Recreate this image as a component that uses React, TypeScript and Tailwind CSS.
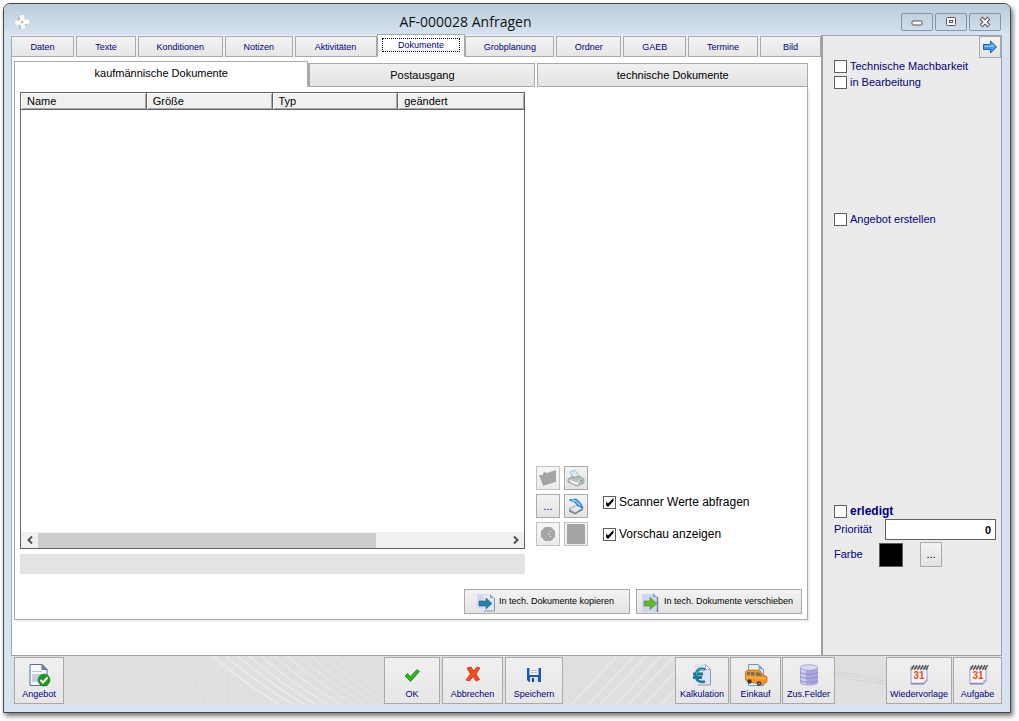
import { useState } from "react";
import type { ReactNode } from "react";

const tabs = [
  { label: "Daten", size: "basis-[63px]" },
  { label: "Texte", size: "basis-[60px]" },
  { label: "Konditionen", size: "basis-[85px]" },
  { label: "Notizen", size: "basis-[68px]" },
  { label: "Aktivitäten", size: "basis-[82px]" },
  { label: "Dokumente", size: "basis-[89px]" },
  { label: "Grobplanung", size: "basis-[89px]" },
  { label: "Ordner", size: "basis-[65px]" },
  { label: "GAEB", size: "basis-[63px]" },
  { label: "Termine", size: "basis-[70px]" },
  { label: "Bild", size: "basis-[61px]" },
];

const button =
  "border border-[#a9a9a9] bg-linear-to-b from-[#f3f3f3] to-[#e3e3e3] flex items-center";

function WindowButton({ label, children }: { label: string; children: ReactNode }) {
  return (
    <button
      aria-label={label}
      className="flex h-[18px] w-8 items-center justify-center rounded-[2px] border border-[#8495ae] bg-linear-to-b from-[#c3d0de] to-[#d0deec]"
    >
      <svg width="14" height="12" viewBox="0 0 14 12">
        {children}
      </svg>
    </button>
  );
}

function CheckBox({
  label,
  checked = false,
  className,
}: {
  label: string;
  checked?: boolean;
  className: string;
}) {
  const [on, setOn] = useState(checked);
  return (
    <label className={`flex items-center gap-[3px] whitespace-nowrap ${className}`}>
      <span className="grid">
        <input
          type="checkbox"
          checked={on}
          onChange={() => setOn(!on)}
          className="col-start-1 row-start-1 size-[13px] appearance-none border border-[#5f5f5f] bg-white"
        />
        {on && (
          <svg
            className="pointer-events-none col-start-1 row-start-1"
            width="13"
            height="13"
            viewBox="0 0 13 13"
          >
            <path d="M3 5.500v3.500l2 2 5.500-6V2L5 7.500z" fill="#000" />
          </svg>
        )}
      </span>
      {label}
    </label>
  );
}

function ToolButton({
  label,
  width,
  children,
}: {
  label: string;
  width: string;
  children: ReactNode;
}) {
  return (
    <button
      className={`flex h-[47px] flex-col items-center justify-end gap-px border border-[#a9a9a9] bg-linear-to-b from-[#f0f0f0] to-[#e6e6e6] pb-[3px] text-[9px] leading-[12px] whitespace-nowrap text-[#000080] ${width}`}
    >
      <svg width="24" height="24" viewBox="0 0 24 24">
        {children}
      </svg>
      {label}
    </button>
  );
}

function Calendar() {
  return (
    <>
      <path d="M4 4h16v14l-3 3H4z" fill="#f6f6fd" stroke="#9c9cc4" />
      <path d="M4 20.500h13l3-3.500" fill="none" stroke="#8d8dba" strokeWidth="1.500" />
      <path d="M17 21v-3.500h3.500z" fill="#b9b9dd" />
      <path d="M4 4.500h16" stroke="#b5b5b5" strokeWidth="3" />
      <path
        d="M4.500 7l2.500-5M7.500 7l2.500-5M10.500 7l2.500-5M13.500 7l2.500-5M16.500 7l2.500-5M19 7l2.500-5"
        stroke="#4a4a4a"
        strokeWidth="1.200"
      />
      <text
        x="12"
        y="16"
        textAnchor="middle"
        fontSize="10"
        fontWeight="bold"
        fontFamily="Liberation Sans, sans-serif"
        fill="#f04a10"
      >
        31
      </text>
    </>
  );
}

function Backdrop() {
  return (
    <svg
      className="absolute inset-0 h-full w-full"
      viewBox="0 0 991 49"
      preserveAspectRatio="none"
      fill="none"
      aria-hidden="true"
    >
      <g stroke="#efefef" strokeWidth="1.200">
        {[0, 13, 25, 36, 48, 61, 74, 86, 98, 110, 122, 134, 146].map((x) => (
          <path key={x} d={`M${202 + x} 0q32 28 68 49`} opacity={1 - x / 190} />
        ))}
        {[0, 17, 29, 44, 57, 73, 90].map((x) => (
          <path key={x} d={`M${560 + x} 49l46-49`} opacity="0.7" />
        ))}
        {[0, 14, 28, 42].map((x) => (
          <path key={x} d={`M${828 + x} 49l16-49`} opacity="0.3" />
        ))}
      </g>
      <g stroke="#e7e7e7" strokeWidth="0.800" opacity="0.7">
        {[0, 4, 8, 12, 16, 20, 25].map((x) => (
          <path key={x} d={`M${96 + x} 49q0-24 9-49`} />
        ))}
        {[0, 8, 16, 24, 32, 40, 48].map((x) => (
          <path key={x} d={`M${176 + x} 0q${7 - x / 4} 22 ${8 - x / 4} 49`} />
        ))}
        <path d="M135 7q50-7 85 0M140 11q45-6 85 2M145 15q45-6 80 1" />
      </g>
      <path
        d="M824 16l50 6M824 18l50 7M824 21l50 7"
        stroke="#d2d2d2"
        strokeWidth="1"
        opacity="0.7"
      />
    </svg>
  );
}

export default function App() {
  const [active, setActive] = useState("Dokumente");

  return (
    <div className="flex h-screen min-h-[640px] flex-col bg-white pt-[3px] pr-2 pb-2 pl-[3px] font-['Liberation_Sans',Arial,sans-serif] text-[11px] text-black">
      <div className="flex min-h-0 flex-1 flex-col rounded-t-[7px] border border-[#484848] bg-[#d6e4f1] pr-2 pb-[7px] pl-[7px] shadow-[2px_3px_5px_rgba(0,0,0,0.55)]">
        <header className="-mr-2 -ml-[7px] flex h-[31px] shrink-0 items-center rounded-t-[6px] bg-linear-to-b from-[#bccbd9] to-[#d6e4f1] pt-1 pr-[9px] pl-[10px]">
          <svg width="16" height="16" viewBox="0 0 16 16">
            <path d="M4 3h5v3h4v5h-4v4H5v-4H1V7h3z" fill="#9fb0c2" opacity=".6" />
            <path d="M6 1.500l4-.5.500 5 4.500-.5.500 4-5 .5.500 4.500-4 .5-.5-4.500-5 .5-.5-4 5-.5z" fill="#fff" />
            <circle cx="8" cy="8" r="1.200" fill="#f3a35c" />
          </svg>
          <h1 className="flex-1 text-center font-['Open_Sans',sans-serif] text-[14px] leading-5 text-[#111]">
            AF-000028 Anfragen
          </h1>
          <div className="flex gap-[2px]">
            <WindowButton label="Minimieren">
              <rect x="2" y="5" width="10" height="4" rx="1" fill="#fff" stroke="#555" />
            </WindowButton>
            <WindowButton label="Maximieren">
              <rect x="2.500" y="1.500" width="9" height="8" rx="1" fill="#fff" stroke="#555" />
              <rect x="5.500" y="4.500" width="3" height="2" fill="#fff" stroke="#555" />
            </WindowButton>
            <WindowButton label="Schließen">
              <path d="M3 2l8 8M11 2l-8 8" stroke="#555" strokeWidth="4" />
              <path d="M3.500 2.500l7 7M10.500 2.500l-7 7" stroke="#fff" strokeWidth="1.800" />
            </WindowButton>
          </div>
        </header>

        <div className="flex min-h-0 flex-1 border-b border-[#a0a0a0]">
          <main className="flex min-w-0 flex-1 flex-col bg-white">
            <nav className="flex h-[22px] shrink-0 items-end bg-[#f0f0f0]">
              {tabs.map((tab, i) => {
                const on = tab.label === active;
                const joined = i === 0 || on || tabs[i - 1].label === active;
                return (
                  <button
                    key={tab.label}
                    onClick={() => setActive(tab.label)}
                    className={`flex grow justify-center border text-[9px] leading-[12px] text-[#000080] ${tab.size} ${
                      joined ? "" : "ml-[2px]"
                    } ${
                      on
                        ? "-mt-px h-[23px] border-[#a9a9a9] border-b-white bg-white px-1 pt-[3px]"
                        : "h-[21px] items-center border-[#a9a9a9] bg-linear-to-b from-[#f3f3f3] to-[#e6e6e6]"
                    }`}
                  >
                    {on ? (
                      <span className="h-[14px] w-full border border-dotted border-black leading-[12px]">
                        {tab.label}
                      </span>
                    ) : (
                      tab.label
                    )}
                  </button>
                );
              })}
            </nav>

            <div className="flex min-h-0 flex-1 flex-col border-l border-[#a9a9a9] pt-1 pr-[13px] pb-[35px] pl-[2px]">
              <div className="flex h-[26px] shrink-0 items-end">
                <button className="h-[26px] flex-[295] border border-b-0 border-[#a9a9a9] bg-white pb-[2px]">
                  kaufmännische Dokumente
                </button>
                <button className="h-6 flex-[226] border border-l-2 border-[#a9a9a9] bg-linear-to-b from-[#f0f0f0] to-[#e3e3e3]">
                  Postausgang
                </button>
                <button className="ml-[2px] h-6 flex-[271] border border-[#a9a9a9] bg-linear-to-b from-[#f0f0f0] to-[#e3e3e3]">
                  technische Dokumente
                </button>
              </div>

              <section className="flex min-h-0 flex-1 flex-col border border-t-0 border-[#a9a9a9] p-[5px] shadow-[2px_2px_0_#f0f0f0]">
                <div className="flex min-h-0 flex-1 gap-[11px]">
                  <div className="flex min-w-0 flex-1 flex-col">
                    <div className="flex min-h-0 flex-1 flex-col border border-[#646464] bg-white">
                      <table className="w-full table-fixed border-separate border-spacing-0">
                        <thead>
                          <tr className="h-[17px]">
                            {["Name", "Größe", "Typ", "geändert"].map((head) => (
                              <th
                                key={head}
                                className="border-r border-b border-[#646464] bg-[#f0f0f0] p-0 pl-[6px] text-left leading-[15px] font-normal shadow-[inset_1px_1px_0_#fff,inset_-1px_-1px_0_#a9a9a9] last:border-r-0"
                              >
                                {head}
                              </th>
                            ))}
                          </tr>
                        </thead>
                        <tbody />
                      </table>
                      <div className="mt-auto flex h-4 items-center bg-[#f0f0f0]">
                        <button aria-label="Nach links" className="flex w-[17px] justify-center">
                          <svg width="8" height="8" viewBox="0 0 8 8" fill="none">
                            <path d="M6 .5L2.500 4 6 7.500" stroke="#505050" strokeWidth="2" />
                          </svg>
                        </button>
                        <div className="flex h-[15px] flex-1">
                          <div className="w-[72%] bg-[#cdcdcd]" />
                        </div>
                        <button aria-label="Nach rechts" className="flex w-[17px] justify-center">
                          <svg width="8" height="8" viewBox="0 0 8 8" fill="none">
                            <path d="M2 .5L5.500 4 2 7.500" stroke="#505050" strokeWidth="2" />
                          </svg>
                        </button>
                      </div>
                    </div>
                    <div className="mt-[5px] h-5 shrink-0 bg-[#e3e3e3]" />
                  </div>

                  <div className="flex w-[266px] shrink-0 items-end gap-[15px] pb-7">
                    <div className="grid grid-cols-[24px_24px] gap-1">
                      <button
                        aria-label="Ordner öffnen"
                        disabled
                        className={`${button} h-6 justify-center opacity-70`}
                      >
                        <svg width="20" height="18" viewBox="0 0 20 18">
                          <path d="M3 7h3V4l2-1 1 1 9-2.500V14l-3 1-9 3-1-3z" fill="#fff" />
                          <path d="M1 6h4V4l2-1 2 1 9-3v12l-3 1-10 3-1-3z" fill="#808080" />
                        </svg>
                      </button>
                      <button aria-label="Drucken" className={`${button} h-6 justify-center`}>
                        <svg width="18" height="18" viewBox="0 0 18 18">
                          <path d="M3 3l5-2 4 6-6 2z" fill="#d5ebfb" stroke="#8aa9c2" strokeWidth=".7" />
                          <path d="M1 10l5-3 1 2 5-2 5 3v4l-7 3-9-4z" fill="#b9bcb9" stroke="#8b8f8b" strokeWidth=".7" />
                          <path d="M2 11l8 3 5-4" stroke="#f4f4f4" fill="none" />
                          <path d="M3 13l7 3 2-1-7-3z" fill="#f8f8f8" />
                          <circle cx="14" cy="11.500" r="1" fill="#3ab43a" />
                        </svg>
                      </button>
                      <button className={`${button} h-6 justify-center text-[#000080]`}>...</button>
                      <button aria-label="Scannen" className={`${button} h-6 justify-center`}>
                        <svg width="18" height="18" viewBox="0 0 18 18">
                          <path d="M2 12l8-4 6 3-8 5z" fill="#e2e7ec" stroke="#7c8792" strokeWidth=".7" />
                          <path d="M2 12.500l6 3.500 8-5v2l-8 4.500-6-3z" fill="#79828a" />
                          <path d="M2 3l7-1q5 3 7 9l-5-2Q8 4 2 3z" fill="#2b8fe8" stroke="#1767b5" strokeWidth=".7" />
                          <path d="M5 3q6 1 8 6" stroke="#8dd0ff" strokeWidth="1.500" fill="none" />
                        </svg>
                      </button>
                      <button
                        aria-label="Verlauf"
                        disabled
                        className={`${button} h-6 justify-center opacity-70`}
                      >
                        <svg width="18" height="18" viewBox="0 0 18 18">
                          <path d="M6 2h6l4 4v6l-4 4H6l-4-4V6z" fill="#808080" />
                          <path d="M9 9h1.500M11 6.500h1M11 11.500h1" stroke="#fff" />
                        </svg>
                      </button>
                      <button
                        aria-label="Leeren"
                        disabled
                        className={`${button} h-6 justify-center opacity-70`}
                      >
                        <svg width="20" height="20" viewBox="0 0 20 20">
                          <path d="M1 0h17l1 1v19H1z" fill="#808080" />
                        </svg>
                      </button>
                    </div>
                    <div className="flex flex-col gap-[18px] pb-[5px] text-[12px] leading-[14px]">
                      <CheckBox label="Scanner Werte abfragen" checked className="" />
                      <CheckBox label="Vorschau anzeigen" checked className="" />
                    </div>
                  </div>
                </div>

                <div className="mt-[15px] flex shrink-0 justify-end gap-[6px] text-[9px]">
                  <button className={`${button} h-[25px] w-[166px] gap-[3px] pl-[11px] whitespace-nowrap`}>
                    <svg width="20" height="20" viewBox="0 0 20 20">
                      <path d="M1 2h11v14H1z" fill="#d3d8f2" />
                      <path d="M7 3h8l4 3v13H7z" fill="#e3e6f8" />
                      <path d="M18.500 6v13H8" stroke="#8b90b0" fill="none" />
                      <path d="M14 2v4h4z" fill="#9a9fb8" />
                      <path d="M3 9h7V6l6 5.500-6 5.500v-3H3z" fill="#2383a8" stroke="#176480" strokeWidth=".6" />
                    </svg>
                    In tech. Dokumente kopieren
                  </button>
                  <button className={`${button} h-[25px] w-[166px] gap-[3px] pl-1 whitespace-nowrap`}>
                    <svg width="20" height="20" viewBox="0 0 20 20">
                      <path d="M1 2h11l5 3v15H1z" fill="#d0d4ef" />
                      <path d="M16.500 5v15" stroke="#7b80a0" strokeWidth="1.500" />
                      <path d="M12 1v4h4z" fill="#9a9fb8" />
                      <path d="M3 9h6V5.500l7 6-7 6V14H3z" fill="#65b82a" stroke="#3f8f17" strokeWidth=".6" />
                    </svg>
                    In tech. Dokumente verschieben
                  </button>
                </div>
              </section>
            </div>
          </main>

          <aside className="flex w-[181px] shrink-0 flex-col border-x border-t border-[#a0a0a0] bg-[#ebebeb] text-[#000080]">
            <div className="flex flex-1 flex-col border-l border-[#a0a0a0] pb-[88px] pl-[11px]">
              <button
                aria-label="Weiter"
                className={`${button} h-[22px] w-[22px] shrink-0 justify-center self-end`}
              >
                <svg width="16" height="16" viewBox="0 0 16 16">
                  <path d="M1.500 5.500h7v-3.500l6 6-6 6v-3.500h-7z" fill="#3d97ea" stroke="#1d5fae" />
                  <path d="M2.500 6.500h7V4.500l3.500 3.500h-10.500z" fill="#8cc8fa" />
                </svg>
              </button>
              <CheckBox label="Technische Machbarkeit" className="h-4" />
              <CheckBox label="in Bearbeitung" className="h-4" />
              <CheckBox label="Angebot erstellen" className="mt-[121px] h-4" />
              <CheckBox label="erledigt" className="mt-auto h-4 text-[12px] font-bold" />
              <div className="flex h-[21px] items-center justify-between pr-[5px]">
                <label htmlFor="prio">Priorität</label>
                <input
                  id="prio"
                  defaultValue="0"
                  className="h-[21px] w-[111px] border border-[#5f5f5f] bg-white pr-1 text-right font-bold text-black"
                />
              </div>
              <div className="mt-[2px] flex h-[25px] items-center">
                <span className="w-[45px]">Farbe</span>
                <span className="size-6 border border-[#5f5f5f] bg-black" />
                <button
                  aria-label="Farbe wählen"
                  className={`${button} ml-[17px] h-[25px] w-[22px] justify-center text-black`}
                >
                  ...
                </button>
              </div>
            </div>
          </aside>
        </div>

        <footer className="relative h-[49px] shrink-0 bg-[#dfdfdf]">
          <Backdrop />
          <div className="relative flex h-full items-start justify-between pt-px pl-[3px]">
            <div className="flex flex-[370]">
              <ToolButton label="Angebot" width="w-[50px]">
                <path d="M3 1.500h12l5 5V22.500H3z" fill="#f6f8fd" stroke="#58719f" />
                <path d="M15 1.500v5h5z" fill="#6f8fc0" stroke="#58719f" />
                <path d="M5 8.500h10" stroke="#b9c2dd" strokeWidth="1" />
                <path d="M5 11h13v8H5z" fill="#c9cde3" />
                <circle cx="17" cy="17" r="6" fill="#1c9a1c" stroke="#0d7510" strokeWidth=".6" />
                <path d="M13.500 17l2.500 2.500 4.500-5" stroke="#fff" strokeWidth="2" fill="none" />
              </ToolButton>
            </div>
            <div className="flex gap-[2px]">
              <ToolButton label="OK" width="w-14">
                <path d="M5 13l2.500-2.500 3 3 6.500-7 2.500 2-9 10z" fill="#30b424" stroke="#168612" strokeWidth=".8" />
              </ToolButton>
              <ToolButton label="Abbrechen" width="w-[61px]">
                <path
                  d="M6 5l4-1 2.500 4 3.500-4 3 1-4 6 3.500 5.500-3.500 1.500-3-4.500-3.500 4.500-3.500-1 4.500-6z"
                  fill="#fb4a20"
                  stroke="#cf2a0c"
                  strokeWidth=".8"
                />
              </ToolButton>
              <ToolButton label="Speichern" width="w-[58px]">
                <path d="M5 5h14v14H7l-2-2z" fill="#1e5ab4" />
                <path d="M7.500 5h9v7h-9z" fill="#f2f5fa" />
                <path d="M9 7.500h6M9 9.500h6" stroke="#b6bcc8" />
                <path d="M8 14h8v5H8z" fill="#d9e2f1" />
                <path d="M10 15h2v4h-2z" fill="#164087" />
              </ToolButton>
            </div>
            <div className="flex flex-[439] justify-end">
              <div className="mr-[51px] flex gap-px">
                <ToolButton label="Kalkulation" width="w-[54px]">
                  <path d="M5 1h11l5 5v16H5z" fill="#dfe2f0" />
                  <path d="M20.500 6v16H8" fill="none" stroke="#9296b4" />
                  <path d="M15.500 1.500v5h5z" fill="#fff" stroke="#9296b4" strokeWidth=".8" />
                  <path
                    d="M15 6.500C9 4.500 6 8 6 12.500S9 20 15 18.500M3 11h10M3 14.500h9"
                    fill="none"
                    stroke="#1c7c98"
                    strokeWidth="2.800"
                  />
                  <path d="M14 6.500q-7-.5-7.500 5" stroke="#63bcd2" fill="none" />
                </ToolButton>
                <ToolButton label="Einkauf" width="w-[51px]">
                  <path d="M4.500 1.500h10l5 5v16h-15z" fill="#e8f2ff" stroke="#6f96cf" />
                  <path d="M14.500 1.500v5h5z" fill="#78a8e3" />
                  <path d="M1.500 9l2-2h12l4 5 3.500 2v5l-4 2.500-14-2.500-3.500-2z" fill="#f7941e" stroke="#b9620b" strokeWidth=".7" />
                  <path d="M3 9h3v3H3zM7 9h3l1 3.500H7zM11.500 9.500h4l3 3.500-6-.3z" fill="#6b6f72" />
                  <path d="M2 14.500l20 1" stroke="#ffc268" />
                  <circle cx="5.500" cy="18.500" r="2.200" fill="#3a3a3a" />
                  <circle cx="15" cy="20.500" r="2.200" fill="#3a3a3a" />
                  <circle cx="15" cy="20.500" r=".8" fill="#ccc" />
                </ToolButton>
                <ToolButton label="Zus.Felder" width="w-[53px]">
                  <path d="M3 4.500v15c0 4 18 4 18 0v-15z" fill="#a9a9dc" />
                  <path d="M4 5v14q2 2 5 2.500V6z" fill="#cdcdf0" />
                  <path
                    d="M3 9c2 3 16 3 18 0M3 13c2 3 16 3 18 0M3 17c2 3 16 3 18 0"
                    fill="none"
                    stroke="#8c8cc4"
                  />
                  <ellipse cx="12" cy="4.500" rx="9" ry="2.800" fill="#d9d9f6" stroke="#9595c8" strokeWidth=".7" />
                </ToolButton>
              </div>
              <div className="flex gap-px">
                <ToolButton label="Wiedervorlage" width="w-[66px]">
                  <Calendar />
                </ToolButton>
                <ToolButton label="Aufgabe" width="w-[49px]">
                  <Calendar />
                </ToolButton>
              </div>
            </div>
          </div>
        </footer>
      </div>
    </div>
  );
}
